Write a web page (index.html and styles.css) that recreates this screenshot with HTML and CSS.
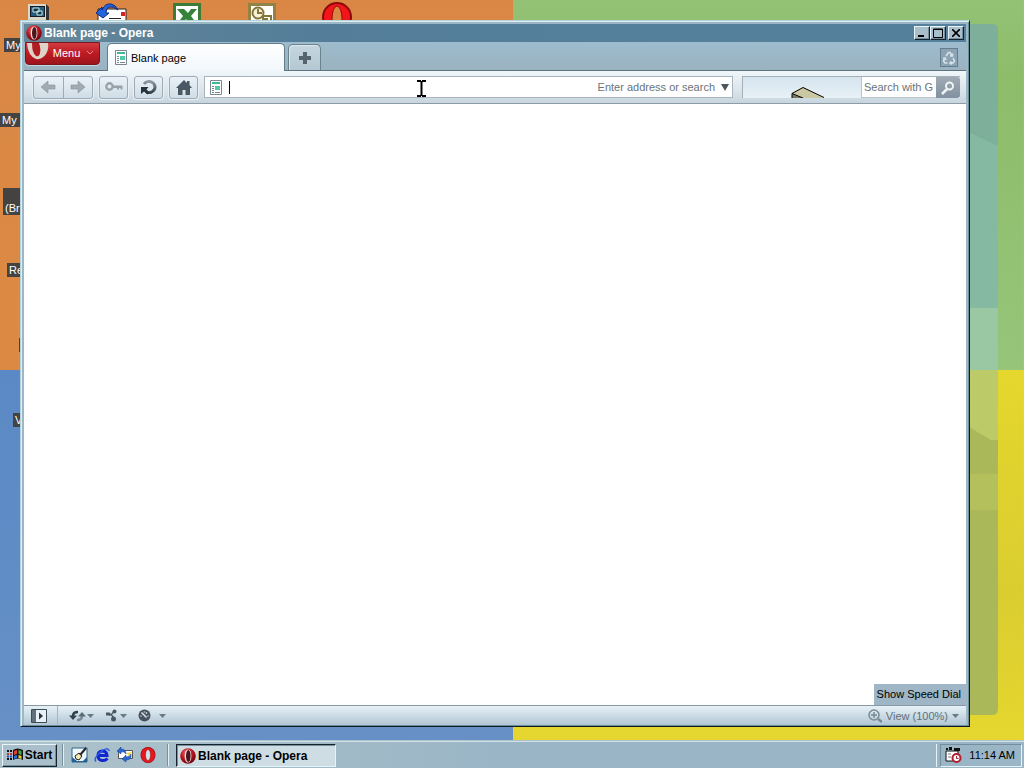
FILE: index.html
```html
<!doctype html>
<html lang="en">
<head>
    <meta charset="utf-8">
    <title>Blank page - Opera</title>
    <link rel="stylesheet" href="styles.css">
</head>
<body>
    <!-- icons that are used more than once -->
    <svg class="defs" width="0" height="0">
        <defs>
            <radialGradient id="red" cx="40%" cy="30%" r="75%">
                <stop offset="0" stop-color="#ee6a6a"/>
                <stop offset=".5" stop-color="#bb1620"/>
                <stop offset="1" stop-color="#650008"/>
            </radialGradient>
            <linearGradient id="steel" x1="0" y1="0" x2="0" y2="1">
                <stop offset="0" stop-color="#8d9aa4"/>
                <stop offset="1" stop-color="#35424d"/>
            </linearGradient>
            <symbol id="opera" viewBox="0 0 16 16">
                <circle cx="8" cy="8" r="7.8" fill="url(#red)"/>
                <ellipse cx="8" cy="8" rx="3.4" ry="6.6" fill="#f4dede"/>
                <ellipse cx="8.3" cy="8" rx="2.3" ry="6" fill="#4c1519"/>
            </symbol>
            <symbol id="page" viewBox="0 0 12 15">
                <path d="M.5.5h11v14H.5z" fill="#fff" stroke="#7b8790"/>
                <path d="M2 2h8v2H2z" fill="#3cba92"/>
                <path d="M5 6h5v4H5z" fill="#4fcba5"/>
                <path d="M2 6.5h2M2 8.500h2M2 10.500h2M2 12.500h2M5 12.500h5" stroke="#7b8790"/>
            </symbol>
            <symbol id="arrow" viewBox="0 0 16 14">
                <path d="M1 7l7-6v4h7v4H8v4z" fill="#a2abb3" stroke="#87929b" stroke-width=".6"/>
            </symbol>
        </defs>
    </svg>

    <main class="desktop">
        <svg class="glass" viewBox="0 0 34 691" preserveAspectRatio="none">
            <path d="M0 0h28q6 0 6 6v340H0z" fill="#7daf9a"/>
            <path d="M0 106l34 16v224H0z" fill="#86b9a1"/>
            <path d="M0 284h34v62H0z" fill="#9ac8a3"/>
            <path d="M0 346h34v339q0 6-6 6H0z" fill="#abb85a"/>
            <path d="M0 346h34v70h-7L0 400z" fill="#bccb68"/>
            <path d="M0 450h34v36H0z" fill="#b4c05b"/>
        </svg>

        <svg class="icon computer" width="24" height="20" viewBox="0 0 24 20">
            <path d="M1 1h18l3 3v15H1z" fill="#333"/>
            <path d="M1 1h18v16H1z" fill="#ddd6c4"/>
            <path d="M3 3h15v11H3z" fill="#101c28"/>
            <path d="M4 4h13v9H4z" fill="#245d78"/>
            <path d="M6 5h6v4H6zM10 8h5v4h-5z" fill="#183443" stroke="#c4edf3"/>
            <path d="M3 17h17v2H3z" fill="#b9b7ac"/>
        </svg>
        <svg class="icon mail" width="34" height="20" viewBox="0 0 34 20">
            <path d="M3 6h28v14H3z" fill="#fff" stroke="#222"/>
            <path d="M26 9h4v4h-4z" fill="#d4212c"/>
            <path d="M14 15.500h12" stroke="#222"/>
            <path d="M1 10l6-6v3q3-7 9-6 5 1 7 6-5-4-9-3-3 1-3 6h3l-6 5z" fill="#2464dc" stroke="#10287e"/>
        </svg>
        <svg class="icon excel" width="28" height="20" viewBox="0 0 28 20">
            <path d="M1.5 1.5h25v19h-25z" fill="#fff" stroke="#3c7c36" stroke-width="3"/>
            <path d="M4 6h7l4 4 3-4h6l-6 7 6 8h-7l-4-5-3 5H4l6-8z" fill="#358239"/>
        </svg>
        <svg class="icon keys" width="28" height="20" viewBox="0 0 28 20">
            <path d="M1.500 1.500h25v19h-25z" fill="#fff" stroke="#918346" stroke-width="3"/>
            <circle cx="10" cy="10" r="5.500" fill="#f7f1d5" stroke="#84763b" stroke-width="2"/>
            <path d="M10 6v4h4M15 13h8v7h-4v-4h-4z" fill="none" stroke="#84763b" stroke-width="2"/>
        </svg>
        <svg class="icon browser" width="32" height="20" viewBox="0 0 32 20">
            <circle cx="16" cy="16" r="14" fill="#f21519" stroke="#8e080b" stroke-width="2"/>
            <ellipse cx="16" cy="18" rx="5" ry="13" fill="#da8746" stroke="#9c0a0d"/>
        </svg>
        <span class="label docs">My</span>
        <span class="label places">My</span>
        <span class="label briefcase">(Br</span>
        <span class="label recycle">Re</span>
        <span class="label blank"></span>
        <span class="label video">V</span>

        <section class="window">
            <header class="titlebar">
                <svg width="16" height="16"><use href="#opera"/></svg>
                <h1>Blank page - Opera</h1>
                <div class="controls">
                    <button aria-label="Minimize"><svg width="10" height="10"><path d="M1 8h6" stroke="#000" stroke-width="2"/></svg></button>
                    <button aria-label="Maximize"><svg width="10" height="10"><path d="M.5 1h9v8.500h-9zM.5 1.500h9" fill="none" stroke="#000"/></svg></button>
                    <button class="close" aria-label="Close"><svg width="8" height="8"><path d="M0 0l8 8M8 0L0 8" stroke="#000" stroke-width="1.600"/></svg></button>
                </div>
            </header>

            <nav class="tabs">
                <button class="menu">
                    <svg class="big-o" width="24" height="20" viewBox="0 0 24 20">
                        <path d="M1 0h21q1 6-2 11-4 6-10 5Q2 13 1 0z" fill="#ddd3c7"/>
                        <path d="M6 0h7q2 6 1 10-1 4-4 3Q6 10 6 0z" fill="#b51b23"/>
                    </svg>
                    <span>Menu</span>
                    <svg width="8" height="6"><path d="M1 1l3 3 3-3" fill="none" stroke="#e98f8f"/></svg>
                </button>
                <button class="tab">
                    <svg width="12" height="15"><use href="#page"/></svg>
                    <span>Blank page</span>
                </button>
                <button class="new-tab" aria-label="New tab">
                    <svg width="12" height="12"><path d="M4 0h4v4h4v4H8v4H4V8H0V4h4z" fill="#56646f"/></svg>
                </button>
                <button class="trash" aria-label="Closed tabs">
                    <svg width="14" height="14" viewBox="0 0 14 14" fill="none" stroke="#d5e3eb" stroke-width="1.600">
                        <path d="M4 5l2.500-3.500h1.500L10 5M8 5h2.500V2.500M11 7l1.500 3-1.500 2H8M9.500 10.500L8 12l1.500 1.500M5.500 12H3l-1.500-2L3 7M1 7.500L3 7l1 2"/>
                    </svg>
                </button>
            </nav>

            <div class="toolbar">
                <div class="pair">
                    <button aria-label="Back"><svg width="16" height="14"><use href="#arrow"/></svg></button>
                    <button aria-label="Forward"><svg class="flip" width="16" height="14"><use href="#arrow"/></svg></button>
                </div>
                <button aria-label="Wand">
                    <svg width="18" height="10" viewBox="0 0 18 10">
                        <circle cx="4.500" cy="4.500" r="3.200" fill="none" stroke="#98a2aa" stroke-width="2.400"/>
                        <path d="M8 3.500h9.500v4h-2v-1.500h-1.500v1.500h-2v-1.500H8z" fill="#98a2aa"/>
                    </svg>
                </button>
                <button aria-label="Reload">
                    <svg width="18" height="16" viewBox="0 0 18 16">
                        <path d="M4 5A6 5.500 0 1 1 6.500 13" fill="none" stroke="url(#steel)" stroke-width="3"/>
                        <path d="M1 8h7.500l-2 2.500 3 3-2 2-3.500-3L1 15z" fill="#27333c"/>
                    </svg>
                </button>
                <button aria-label="Home">
                    <svg width="16" height="15" viewBox="0 0 16 15"><path d="M8 0l3 3V1h2.500v4L16 8h-2v7H9.500v-5h-3v5H2V8H0z" fill="#4a5863"/></svg>
                </button>
                <label class="address">
                    <svg width="12" height="15"><use href="#page"/></svg>
                    <i class="caret"></i>
                    <input type="text" placeholder="Enter address or search" aria-label="Address">
                    <svg width="8" height="7"><path d="M0 0h8L4 7z" fill="#4c565d"/></svg>
                </label>
                <div class="search">
                    <svg class="crate" width="34" height="12" viewBox="0 0 34 12">
                        <path d="M1 12V7l11-6 21 11z" fill="#cac7a3"/>
                        <path d="M1 8l11 4H1z" fill="#77785f"/>
                        <path d="M1 12V7.500L12 1.500 33 11.500M1 7.500l11 4.500" fill="none" stroke="#000"/>
                    </svg>
                    <input type="text" placeholder="Search with Google" aria-label="Search">
                    <button aria-label="Search">
                        <svg width="14" height="14"><circle cx="8.500" cy="5" r="3.500" fill="none" stroke="#eef3f6" stroke-width="2"/><path d="M6 8l-5 5" stroke="#eef3f6" stroke-width="2.500"/></svg>
                    </button>
                </div>
            </div>

            <div class="page">
                <span class="tooltip">Show Speed Dial</span>
            </div>

            <footer class="status">
                <button class="panel" aria-label="Panels">
                    <svg width="16" height="14"><path d="M.5.500h15v13H.5z" fill="#e9f1f6" stroke="#3f4c57"/><path d="M1 1h4v12H1z" fill="#5f707e"/><path d="M8 3.500l4 3.500-4 3.500z" fill="#27333d"/></svg>
                </button>
                <button aria-label="Synchronize">
                    <svg width="17" height="12" viewBox="0 0 17 12">
                        <path d="M4 6q0-4 5-4" fill="none" stroke="#33404b" stroke-width="2.500"/>
                        <path d="M0 5.500h8L4 10z" fill="#33404b"/>
                        <path d="M13 6q0 4-5 4" fill="none" stroke="#7e8b96" stroke-width="2.500"/>
                        <path d="M9 6.500h8L13 2z" fill="#5d6b76"/>
                    </svg>
                    <svg class="drop" width="7" height="4"><path d="M0 0h7L3.500 4z"/></svg>
                </button>
                <button aria-label="Unite">
                    <svg width="14" height="13" viewBox="0 0 14 13" fill="#4b5965">
                        <path d="M1 3.500h4v3H1z"/><circle cx="9.500" cy="2.500" r="2"/><circle cx="8.500" cy="10" r="2.500"/><path d="M4 6q3 0 5-4M4 5q4 1 5 5" fill="none" stroke="#4b5965" stroke-width="1.500"/>
                    </svg>
                    <svg class="drop" width="7" height="4"><path d="M0 0h7L3.500 4z"/></svg>
                </button>
                <button class="turbo" aria-label="Turbo">
                    <svg width="13" height="13" viewBox="0 0 13 13">
                        <circle cx="6.500" cy="6.500" r="6" fill="#46535e"/>
                        <path d="M3.500 3.500l5 5M2.500 7h1M6.500 2.500v1M9.500 7h1M9 3.500l-1 1" stroke="#dce7ee" stroke-width="1.500"/>
                    </svg>
                    <svg class="drop" width="7" height="4"><path d="M0 0h7L3.500 4z"/></svg>
                </button>
                <button class="zoom">
                    <svg width="14" height="14" viewBox="0 0 14 14" fill="none" stroke="#7b8994">
                        <circle cx="6" cy="6" r="5" stroke-width="1.500"/><path d="M6 3v6M3 6h6" stroke-width="1.500"/><path d="M10 10l4 3" stroke-width="2.500"/>
                    </svg>
                    <span>View (100%)</span>
                    <svg class="drop" width="7" height="4"><path d="M0 0h7L3.500 4z"/></svg>
                </button>
            </footer>
        </section>

        <svg class="pointer" width="9" height="17"><path d="M0 1h4M5 1h4M4.500 1v15M0 16h4M5 16h4" stroke="#000" stroke-width="2"/></svg>
    </main>

    <footer class="taskbar">
        <button class="start">
            <svg width="17" height="14" viewBox="0 0 17 14">
                <path d="M6 2q4-3 10 0v10q-5-3-10 0z" fill="#111"/>
                <path d="M7 3q2-1 3-1v4L7 7z" fill="#e33b2e"/><path d="M11.500 2l3 1v4l-3-1z" fill="#48a83e"/>
                <path d="M7 8q2-1 3-1v3l-3 1z" fill="#316fd3"/><path d="M11.500 7l3 1v3l-3-1z" fill="#f1ce2f"/>
                <path d="M0 3h2M3 3h2M0 11h2M3 11h2" stroke="#111" stroke-width="2"/><path d="M0 6h2M3 6h2" stroke="#b93838" stroke-width="2"/><path d="M0 8.500h2M3 8.500h2" stroke="#2f4eb0" stroke-width="2"/>
            </svg>
            <span>Start</span>
        </button>
        <div class="launch">
            <a href="#" aria-label="Show desktop">
                <svg width="17" height="16"><path d="M1 1h15v14H1z" fill="#eef8fa" stroke="#2b6687"/><path d="M1 15v-5l5 4h10v1zM12 14l4-4v4z" fill="#245f95"/><path d="M4 9l4-3 3 3-3 4q-4 0-4-4z" fill="#f3e9b3" stroke="#222"/><path d="M9 8l6-7" stroke="#222" stroke-width="2"/></svg>
            </a>
            <a href="#" aria-label="Internet Explorer">
                <svg width="17" height="16" fill="none"><path d="M13.500 11.500Q11 14 8 13.500q-4-.5-4-5 0-4 4.500-4.500 4 0 4.500 4.500H5" stroke="#1026cf" stroke-width="3"/><path d="M2 14.500Q-1 12 6 5.500T15.500 4" stroke="#2f5ee0" stroke-width="1.500"/></svg>
            </a>
            <a href="#" aria-label="Outlook Express">
                <svg width="17" height="16"><path d="M1.500 3.500h14v8h-14z" fill="#fff" stroke="#555"/><path d="M9 6l6-1-3 4z" fill="#f1d34b"/><path d="M0 4l4-4v2q5 0 5 5-2-3-5-2v2zM5 12l4-4v2q4 0 5-3 1 6-5 6v2z" fill="#2967d4" stroke="#123a88" stroke-width=".5"/></svg>
            </a>
            <a href="#" aria-label="Opera">
                <svg width="16" height="16"><ellipse cx="8" cy="8" rx="7.500" ry="8" fill="#8c0c11"/><ellipse cx="8" cy="8" rx="7" ry="7.500" fill="#e5171d"/><ellipse cx="8" cy="8" rx="2.500" ry="5.500" fill="#d5e1e8" stroke="#8c0c11" stroke-width=".5"/></svg>
            </a>
        </div>
        <div class="tasks">
            <button class="task">
                <svg width="16" height="16"><use href="#opera"/></svg>
                <span>Blank page - Opera</span>
            </button>
        </div>
        <div class="tray">
            <svg width="17" height="16"><path d="M1 4h12v10H1z" fill="#fff" stroke="#111"/><path d="M1 1h2v2H1zM4 0h3v3H4zM9 1h6v3H9z" fill="#111"/><path d="M3 7h3M3 10h3" stroke="#777"/><circle cx="11.500" cy="11" r="4" fill="#fff" stroke="#b11c2e" stroke-width="2"/><path d="M11.500 9v2.500h2" fill="none" stroke="#b11c2e"/></svg>
            <time>11:14 AM</time>
        </div>
    </footer>
</body>
</html>
```
FILE: styles.css
```css
* {
    box-sizing: border-box;
}

body {
    display: flex;
    flex-direction: column;
    height: 100vh;
    margin: 0;
    overflow: hidden;
    font: 11px/14px 'Liberation Sans', Arial, sans-serif;
    color: #000;
}

button, input {
    margin: 0;
    padding: 0;
    border: 0;
    background: none;
    font: inherit;
    color: inherit;
}

button {
    display: flex;
    align-items: center;
    justify-content: center;
}

input {
    min-width: 0;
    outline: 0;
}

svg {
    display: block;
    flex: none;
}

.defs {
    position: absolute;
}

/* desktop */

.desktop {
    position: relative;
    flex: 1;
    overflow: hidden;
    background:
        linear-gradient(#da8746, #dc8a43) 0 0 / 50.1% 50% no-repeat,
        linear-gradient(#93c276, #8dbd69 20%, #96c57a) 100% 0 / 49.9% 50% no-repeat,
        linear-gradient(#5a89c5, #6690c6) 0 100% / 50.1% 50% no-repeat,
        linear-gradient(#e5d72d, #dacd30 60%, #e6d62f) 100% 100% / 49.9% 50% no-repeat;
}

.glass {
    position: absolute;
    top: 24px;
    right: 26px;
    width: 34px;
    height: calc(100% - 49px);
}

.icon, .label {
    position: absolute;
}

.icon { top: 3px; }
.computer { left: 27px; }
.mail { left: 95px; }
.excel { left: 173px; }
.keys { left: 248px; }
.browser { left: 321px; top: 1px; }

.label {
    min-width: 20px;
    min-height: 14px;
    padding: 0 2px;
    background: #444341;
    color: #fff;
    white-space: nowrap;
}

.docs { left: 4px; top: 38px; }
.places { left: 0; top: 113px; }
.briefcase { left: 3px; top: 188px; padding-top: 13px; }
.recycle { left: 7px; top: 263px; }
.blank { left: 19px; top: 338px; }
.video { left: 13px; top: 413px; }

.pointer {
    position: absolute;
    left: 417px;
    top: 80px;
}

/* browser window */

.window {
    position: absolute;
    top: 20px;
    right: 54px;
    bottom: 13px;
    left: 20px;
    display: flex;
    flex-direction: column;
    padding: 3px 3px 1px;
    background: #9cb7c6;
    border: 1px solid #b5d3dc;
    border-right-color: #101b24;
    border-bottom-color: #101b24;
    box-shadow: inset 1px 1px #dcedf0, inset -1px -1px #6f8c9a;
}

.titlebar {
    display: flex;
    align-items: center;
    gap: 2px;
    height: 18px;
    padding: 0 2px;
    background: linear-gradient(90deg, #658799, #537d99 30%, #56819c);
    color: #fff;
}

h1 {
    margin: 0;
    font: bold 12px/14px 'Liberation Sans', Arial, sans-serif;
}

.controls {
    display: flex;
    margin-left: auto;
}

.controls button, .start {
    background: #a9c0cc;
    border: 1px solid;
    border-color: #e8f3f7 #16232d #16232d #e8f3f7;
    box-shadow: inset -1px -1px #758e9d;
}

.controls button {
    width: 16px;
    height: 14px;
}

.controls .close {
    margin-left: 2px;
}

.tabs {
    display: flex;
    align-items: flex-end;
    height: 29px;
    padding: 0 8px 0 1px;
    background: linear-gradient(#9dbccd, #9bb2c0);
    border-bottom: 1px solid #5d7480;
}

.menu {
    position: relative;
    align-self: flex-start;
    gap: 6px;
    width: 75px;
    height: 23px;
    padding: 0 6px 2px 28px;
    background: linear-gradient(#d33b41, #bd1a22 50%, #9d141d);
    border: 1px solid #791720;
    border-radius: 0 0 4px 4px;
    box-shadow: 0 1px #c5d7df;
    color: #fff;
}

.big-o {
    position: absolute;
    top: 0;
    left: 0;
}

.tab {
    justify-content: flex-start;
    gap: 4px;
    width: 178px;
    height: 28px;
    margin: 0 3px -1px 7px;
    padding-left: 7px;
    background: linear-gradient(#fff, #f2f8fb);
    border: 1px solid #647c89;
    border-bottom: 0;
    border-radius: 5px 5px 0 0;
}

.new-tab {
    width: 33px;
    height: 26px;
    background: linear-gradient(#c5d6df, #b5c8d3);
    border: 1px solid #6a818e;
    border-bottom: 0;
    border-radius: 5px 5px 0 0;
    box-shadow: inset 1px 1px #dce8ee;
}

.trash {
    width: 18px;
    height: 19px;
    margin: 0 0 3px auto;
    background: #8ba3b2;
    border: 1px solid #647d8c;
}

.toolbar {
    display: flex;
    align-items: center;
    gap: 6px;
    height: 33px;
    padding: 0 6px 0 9px;
    background: linear-gradient(#f0f7fa, #d6e1e8 70%, #c8d5de);
    border-bottom: 1px solid #8c9da8;
}

.toolbar > button, .pair {
    width: 29px;
    height: 23px;
    background: linear-gradient(#eaf2f7, #d0dde6);
    border: 1px solid #9cabb6;
    border-radius: 3px;
    box-shadow: 0 0 0 1px #e8f0f5;
}

.pair {
    display: flex;
    width: 60px;
}

.pair button {
    flex: 1;
}

.pair button + button {
    border-left: 1px solid #9cabb6;
}

.flip {
    transform: scaleX(-1);
}

.address {
    display: flex;
    flex: 1;
    align-items: center;
    height: 22px;
    padding: 0 3px 0 5px;
    background: #fff;
    border: 1px solid #a8b5be;
}

.address input {
    flex: 1;
    margin-right: 6px;
}

.address input::placeholder {
    text-align: right;
}

.caret {
    width: 1px;
    height: 13px;
    margin-left: 7px;
    background: #000;
}

::placeholder {
    color: #69737a;
    opacity: 1;
}

.search {
    display: flex;
    align-items: flex-end;
    height: 22px;
    margin-left: 3px;
    background: linear-gradient(#d5e4ee, #e8f1f6);
    border: 1px solid #a2b0ba;
    border-width: 1px 0 0 1px;
}

.crate {
    margin: 0 36px 0 48px;
}

.search input {
    width: 75px;
    height: 21px;
    padding: 0 3px 0 2px;
    background: #fff;
    border: 1px solid #b9c5cd;
    border-width: 0 0 1px 1px;
}

.search button {
    width: 24px;
    height: 21px;
    background: linear-gradient(#9faab3, #8290a0);
    border-radius: 0 3px 3px 0;
}

.page {
    position: relative;
    flex: 1;
    background: #fff;
}

.tooltip {
    position: absolute;
    right: 0;
    bottom: 0;
    padding: 3px 5px 4px 3px;
    background: #9eb6c5;
}

.status {
    display: flex;
    align-items: center;
    gap: 11px;
    height: 20px;
    padding: 0 7px;
    background: linear-gradient(#e7f1f7, #b1c6d3);
    border-top: 1px solid #8799a5;
}

.status button {
    gap: 1px;
}

.status .panel {
    height: 19px;
    padding-right: 10px;
    border-right: 1px solid #a4b5c0;
}

.status .turbo {
    gap: 8px;
}

.status .zoom {
    gap: 4px;
    margin-left: auto;
    color: #606e79;
}

.drop {
    fill: #6a7984;
}

/* taskbar */

.taskbar {
    display: flex;
    align-items: center;
    height: 28px;
    padding: 2px 2px 0;
    background: linear-gradient(90deg, #adc3cb, #9ab5c6 50%);
    box-shadow: inset 0 1px #a9c2ce, inset 0 2px #d3e1e8;
}

.start {
    gap: 1px;
    width: 55px;
    height: 23px;
    font: bold 12px/14px 'Liberation Sans', Arial, sans-serif;
}

.launch {
    display: flex;
    gap: 6px;
    height: 22px;
    align-items: center;
    margin-left: 5px;
    padding: 0 11px 0 8px;
    border: solid #78909e;
    border-width: 0 1px;
    box-shadow: inset 1px 0 #e4eff3, 1px 0 #e4eff3;
}

.tasks {
    flex: 1;
    margin-left: 8px;
}

.task {
    justify-content: flex-start;
    gap: 2px;
    width: 160px;
    height: 23px;
    padding: 1px 0 0 3px;
    background: #cedde4;
    border: 1px solid;
    border-color: #16232d #e8f3f7 #e8f3f7 #16232d;
    box-shadow: inset 1px 1px #758e9d;
    font: bold 12px/14px 'Liberation Sans', Arial, sans-serif;
}

.tray {
    display: flex;
    align-items: center;
    gap: 7px;
    height: 23px;
    padding: 0 6px 0 4px;
    border: 1px solid;
    border-color: #758e9d #e8f3f7 #e8f3f7 #758e9d;
    box-shadow: -3px 0 #9ab5c6, -4px 0 #e8f3f7;
}
```
